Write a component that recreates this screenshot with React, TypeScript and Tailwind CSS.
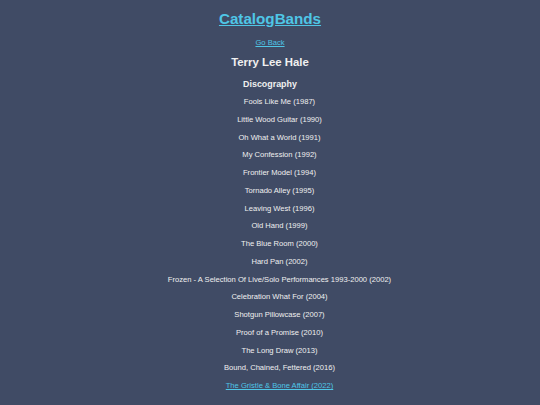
import React from "react";

const albums = [
  "Fools Like Me (1987)",
  "Little Wood Guitar (1990)",
  "Oh What a World (1991)",
  "My Confession (1992)",
  "Frontier Model (1994)",
  "Tornado Alley (1995)",
  "Leaving West (1996)",
  "Old Hand (1999)",
  "The Blue Room (2000)",
  "Hard Pan (2002)",
  "Frozen - A Selection Of Live/Solo Performances 1993-2000 (2002)",
  "Celebration What For (2004)",
  "Shotgun Pillowcase (2007)",
  "Proof of a Promise (2010)",
  "The Long Draw (2013)",
  "Bound, Chained, Fettered (2016)",
];

export default function App() {
  return (
    <div
      className="min-h-[405px] w-full bg-[#404b65] text-[#f0f0f0] flex flex-col items-center pt-[1px]"
      style={{ fontFamily: '"Liberation Sans", Arial, sans-serif' }}
    >
      <div className="h-[36px] flex items-center">
        <a href="#" className="text-[15.2px] font-bold text-[#4fc6e6] underline">
          CatalogBands
        </a>
      </div>
      <div className="h-[12px] flex items-center">
        <a href="#" className="text-[7.6px] text-[#4fc6e6] underline">
          Go Back
        </a>
      </div>
      <div className="h-[28px] flex items-center">
        <h2 className="text-[11.4px] font-bold">Terry Lee Hale</h2>
      </div>
      <div className="h-[16px] flex items-center">
        <h3 className="text-[8.9px] font-bold">Discography</h3>
      </div>
      <ul className="flex flex-col items-center pl-[19px]">
        {albums.map((a) => (
          <li key={a} className="h-[17.75px] flex items-center text-[7.6px]">
            {a}
          </li>
        ))}
        <li className="h-[17.75px] flex items-center text-[7.6px]">
          <a href="#" className="text-[#4fc6e6] underline">
            The Gristle &amp; Bone Affair (2022)
          </a>
        </li>
      </ul>
    </div>
  );
}
